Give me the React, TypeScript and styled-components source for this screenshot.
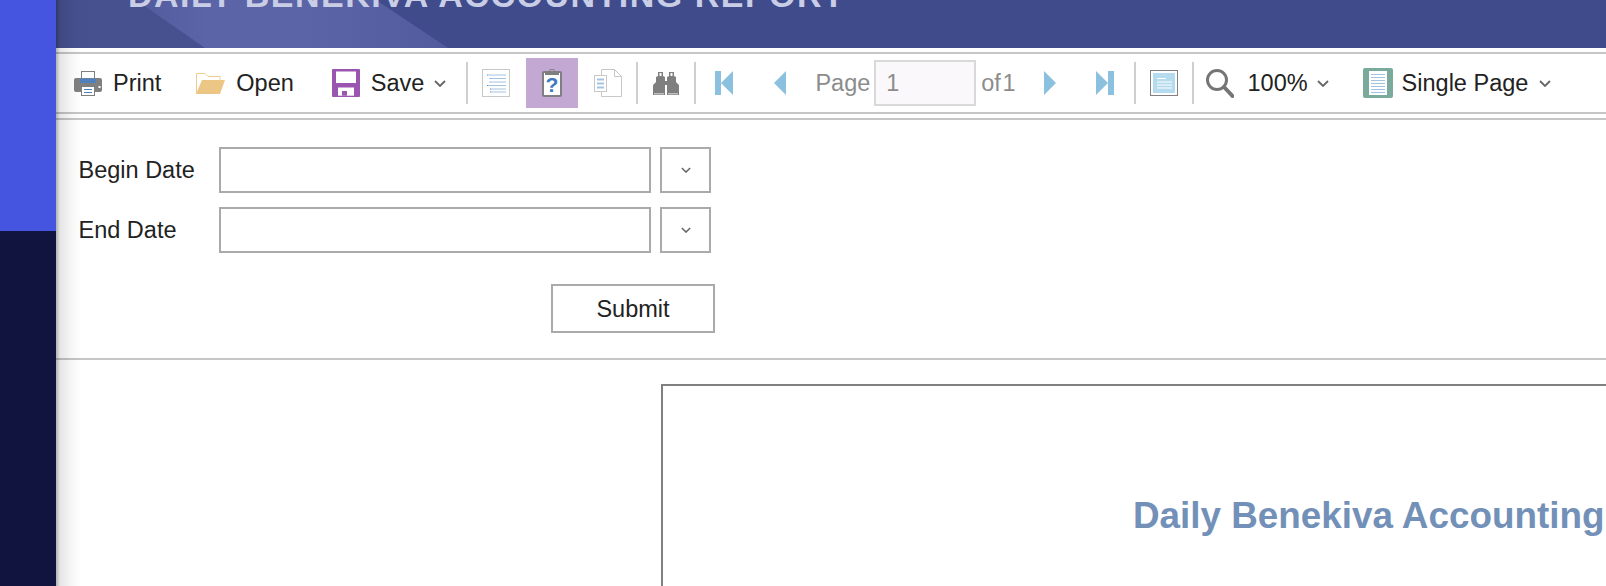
import React from "react";
import styled, { createGlobalStyle } from "styled-components";

const Global = createGlobalStyle`
  html, body { margin: 0; padding: 0; height: 100%; overflow: hidden; background: #fff; }
  #root { height: 100%; }
  * { box-sizing: border-box; }
`;

const Page = styled.div`
  display: flex;
  width: 100%;
  height: 100vh;
  overflow: hidden;
  font-family: "Liberation Sans", Arial, sans-serif;
  color: #222;
`;

const Sidebar = styled.aside`
  flex: 0 0 56px;
  background: linear-gradient(#4655e0 231px, #10143f 231px);
`;

const Main = styled.main`
  position: relative;
  flex: 1;
  min-width: 0;
  display: flex;
  flex-direction: column;
  background: #fff;
  &::after {
    content: "";
    position: absolute;
    left: 0;
    top: 0;
    bottom: 0;
    width: 26px;
    background: linear-gradient(90deg, rgba(0, 0, 0, 0.3), rgba(0, 0, 0, 0.1) 4px, rgba(0, 0, 0, 0.03) 16px, transparent);
    pointer-events: none;
  }
`;

const Header = styled.header`
  position: relative;
  flex: 0 0 48px;
  overflow: hidden;
  background: #404b8c;
  padding-left: 72px;
  &::before {
    content: "";
    position: absolute;
    inset: 0;
    background: linear-gradient(90deg, #4b5592 0, #525b9c 80px, #5b64a7 150px, #5b64a7 250px, #525b9d 392px);
    clip-path: polygon(0 0, 320px 0, 392px 48px, 0 48px);
  }
  &::after {
    content: "";
    position: absolute;
    inset: 0;
    background: linear-gradient(90deg, #46508f, #4e5797);
    clip-path: polygon(0 0, 80px 0, 149px 48px, 0 48px);
  }
`;

const HeaderTitle = styled.h1`
  position: relative;
  z-index: 1;
  margin: -24px 0 0;
  font-size: 34px;
  line-height: 38px;
  font-weight: 700;
  letter-spacing: 1.5px;
  white-space: nowrap;
  color: #c9cee6;
`;

const ToolbarFrame = styled.div`
  margin-top: 4px;
  border-top: 2px solid #c6c6c6;
  border-bottom: 2px solid #c6c6c6;
`;

const Toolbar = styled.nav`
  display: flex;
  align-items: center;
  height: 58px;
  padding-left: 18px;
  font-size: 23.5px;
`;

const Tool = styled.div<{ $gap?: number; $after?: number }>`
  display: flex;
  align-items: center;
  gap: ${(p) => p.$gap ?? 11}px;
  margin-right: ${(p) => p.$after ?? 0}px;
  white-space: nowrap;
  svg { flex: none; display: block; }
`;

const Chevron = styled.svg<{ $shift: number }>`
  margin-left: ${(p) => p.$shift}px;
`;

const Separator = styled.span<{ $before?: number; $after?: number }>`
  flex: none;
  width: 2px;
  height: 42px;
  background: #cfcfcf;
  margin-left: ${(p) => p.$before ?? 2}px;
  margin-right: ${(p) => p.$after ?? 2}px;
`;

const IconButton = styled.div<{ $active?: boolean; $after?: number }>`
  flex: none;
  width: 52px;
  height: 50px;
  display: flex;
  align-items: center;
  justify-content: center;
  background: ${(p) => (p.$active ? "#c3a8d4" : "transparent")};
  margin-right: ${(p) => p.$after ?? 0}px;
  svg { display: block; }
`;

const Muted = styled.span<{ $before?: number; $after?: number }>`
  flex: none;
  color: #8c8c8c;
  white-space: nowrap;
  word-spacing: -5px;
  margin-left: ${(p) => p.$before ?? 0}px;
  margin-right: ${(p) => p.$after ?? 0}px;
`;

const PageInput = styled.div`
  flex: none;
  width: 102px;
  height: 46px;
  border: 2px solid #d9d9d9;
  background: #faf8fb;
  color: #8c8c8c;
  padding-left: 10px;
  display: flex;
  align-items: center;
  margin-right: 5px;
`;

const FormPanel = styled.section`
  margin-top: 4px;
  border-top: 2px solid #c6c6c6;
  border-bottom: 2px solid #c6c6c6;
  padding: 27px 0 25px 22.5px;
`;

const Form = styled.div`
  width: 636.5px;
  display: flex;
  flex-direction: column;
  gap: 14.5px;
`;

const FieldRow = styled.div`
  display: flex;
  align-items: center;
  font-size: 23.5px;
`;

const FieldLabel = styled.label`
  flex: 0 0 140.5px;
  padding-top: 2px;
`;

const DateInput = styled.div`
  flex: 0 0 432px;
  height: 45.5px;
  border: 2px solid #aaa;
  background: #fff;
`;

const DropButton = styled.div`
  flex: 0 0 51px;
  height: 45.5px;
  margin-left: 9px;
  border: 2px solid #aaa;
  display: flex;
  align-items: center;
  justify-content: center;
`;

const SubmitButton = styled.div`
  align-self: flex-end;
  width: 164px;
  height: 49px;
  margin-top: 17px;
  padding-top: 2px;
  border: 2px solid #aaa;
  display: flex;
  align-items: center;
  justify-content: center;
  font-size: 23.5px;
`;

const ReportArea = styled.section`
  flex: 1;
  padding: 24px 0 0 605px;
  min-height: 0;
`;

const ReportBox = styled.div`
  width: 1400px;
  height: 600px;
  border: 2px solid #808080;
  padding: 107px 0 0 470px;
`;

const ReportTitle = styled.h2`
  margin: 0;
  font-size: 36.85px;
  line-height: 46px;
  font-weight: 700;
  color: #7290b8;
  white-space: nowrap;
`;

const Chev = ({ small, shift = -1 }: { small?: boolean; shift?: number }) => (
  <Chevron $shift={small ? 0 : shift} width={small ? 10 : 12} height={small ? 6 : 7} viewBox="0 0 12 7" fill="none">
    <path d="M1 1l5 5 5-5" stroke="#666" strokeWidth="1.8" />
  </Chevron>
);

const PrintIcon = () => (
  <svg width="28" height="25" viewBox="0 0 28 25">
    <rect x="7.500" y=".5" width="13" height="9" fill="#fff" stroke="#808080" />
    <path d="M2 7h24a2 2 0 0 1 2 2v10a2 2 0 0 1-2 2H2a2 2 0 0 1-2-2V9a2 2 0 0 1 2-2z" fill="#808080" />
    <rect x="6" y="7.500" width="16" height="4.500" fill="#4f81bd" />
    <rect x="24.500" y="15" width="2" height="2" fill="#fff" />
    <rect x="7.500" y="15.500" width="13" height="9" fill="#fff" stroke="#808080" />
    <path d="M10 18.500h8M10 21.500h8" stroke="#4f81bd" />
  </svg>
);

const OpenIcon = () => (
  <svg width="29" height="21" viewBox="0 0 29 21" fill="none">
    <path d="M.5 21V.5H9l3 3h12V7" stroke="#eecb8f" />
    <path d="M0 21 6 7h23l-5 14z" fill="#ebc684" />
  </svg>
);

const SaveIcon = () => (
  <svg width="28" height="28" viewBox="0 0 28 28">
    <rect width="28" height="28" fill="#9a55b0" rx="1" />
    <rect x="4" y="2.500" width="20" height="11.500" fill="#fff" />
    <rect x="6" y="18.500" width="16" height="8.200" fill="#fff" />
    <rect x="10" y="22" width="5" height="4.700" fill="#9a55b0" />
  </svg>
);

const ListIcon = () => (
  <svg width="28" height="28" viewBox="0 0 28 28" fill="none">
    <rect x=".5" y=".5" width="27" height="27" fill="#fff" stroke="#c8c8c8" />
    <path d="M6 6h18M8.500 9.500h15.500M8.500 13h15.500M6 16.500h18M8.500 20h15.500M8.500 23h15.500" stroke="#a3c3e2" />
    <path d="M5 6h1M7.500 9.500h1M7.500 13h1M5 16.500h1M8 20h1M8 23h1" stroke="#5b8ec6" />
  </svg>
);

const ClipboardIcon = () => (
  <svg width="20" height="28" viewBox="0 0 20 28">
    <rect x="1" y="3" width="18" height="24" rx="1" fill="#fff" stroke="#7f7f7f" strokeWidth="2" />
    <rect x="3" y="3" width="14" height="3" fill="#7f7f7f" />
    <path d="M7.500 3.500V1.500a1 1 0 0 1 1-1h3a1 1 0 0 1 1 1v2" fill="none" stroke="#7f7f7f" />
    <text x="10" y="23" textAnchor="middle" fontFamily="Liberation Sans" fontWeight="700" fontSize="21" fill="#3f78bf">
      ?
    </text>
  </svg>
);

const CopyIcon = () => (
  <svg width="28" height="28" viewBox="0 0 28 28" fill="none">
    <path d="M7.500 .5h13l7 7v20h-20z" fill="#fff" stroke="#c8c8c8" />
    <path d="M20.500 .5v7h7" stroke="#c8c8c8" />
    <rect x=".5" y="6.500" width="12" height="16" fill="#fff" stroke="#c8c8c8" />
    <path d="M3 10.500h7M3 14.500h7M3 18.500h7" stroke="#a3c3e2" strokeWidth="2" />
  </svg>
);

const BinocularsIcon = () => (
  <svg width="26" height="23" viewBox="0 0 26 23">
    <path d="M5 0h5v4l2 1v18H0V13l3-3V5l2-1z" fill="#7f7f7f" />
    <path d="M21 0h-5v4l-2 1v18h12V13l-3-3V5l-2-1z" fill="#7f7f7f" />
    <rect x="12" y="9" width="2" height="4" fill="#7f7f7f" />
    <path d="M6.500 1h2v3h-2zM17.500 1h2v3h-2zM1 21.500h10v.8H1zM15 21.500h10v.8H15z" fill="#fff" />
  </svg>
);

const NavIcon = ({ kind }: { kind: "first" | "prev" | "next" | "last" }) => {
  const c = "#8bc0de";
  if (kind === "first")
    return (
      <svg width="18" height="24" viewBox="0 0 18 24">
        <rect width="6" height="24" fill={c} />
        <path d="M18 0v24L6 12z" fill={c} />
      </svg>
    );
  if (kind === "last")
    return (
      <svg width="18" height="24" viewBox="0 0 18 24">
        <rect x="12" width="6" height="24" fill={c} />
        <path d="M0 0v24l12-12z" fill={c} />
      </svg>
    );
  if (kind === "prev")
    return (
      <svg width="12" height="24" viewBox="0 0 12 24">
        <path d="M12 0v24L0 12z" fill={c} />
      </svg>
    );
  return (
    <svg width="12" height="24" viewBox="0 0 12 24">
      <path d="M0 0v24l12-12z" fill={c} />
    </svg>
  );
};

const ViewIcon = () => (
  <svg width="28" height="26" viewBox="0 0 28 26" fill="none">
    <rect x=".5" y=".5" width="27" height="25" fill="#fff" stroke="#808080" />
    <rect x="3" y="3" width="22" height="20" fill="#b5dbef" />
    <path d="M7 8.500h9M7 12h15M7 15h15M7 18h15" stroke="#fff" />
  </svg>
);

const SearchIcon = () => (
  <svg width="28" height="29" viewBox="0 0 28 29" fill="none">
    <circle cx="11" cy="11" r="9.500" stroke="#757575" strokeWidth="3" />
    <path d="M18 18l8.500 9" stroke="#757575" strokeWidth="4" strokeLinecap="round" />
  </svg>
);

const SinglePageIcon = () => (
  <svg width="30" height="30" viewBox="0 0 30 30" fill="none">
    <rect width="30" height="30" rx="2" fill="#7aaa9b" />
    <rect x="6" y="3" width="18" height="24" fill="#fff" />
    <path d="M8 6.500h14M8 9.500h14M8 12.500h14M8 15.500h14M8 18.500h14M8 21.500h14M8 24.500h14" stroke="#a3c3e2" />
  </svg>
);

export default function App() {
  return (
    <Page>
      <Global />
      <Sidebar />
      <Main>
        <Header>
          <HeaderTitle>DAILY BENEKIVA ACCOUNTING REPORT</HeaderTitle>
        </Header>
        <ToolbarFrame>
          <Toolbar>
            <Tool $after={35}>
              <PrintIcon />
              <span>Print</span>
            </Tool>
            <Tool $after={38}>
              <OpenIcon />
              <span>Open</span>
            </Tool>
            <Tool $after={18}>
              <SaveIcon />
              <span>Save</span>
              <Chev />
            </Tool>
            <Separator />
            <IconButton $after={4}><ListIcon /></IconButton>
            <IconButton $active $after={4}><ClipboardIcon /></IconButton>
            <IconButton><CopyIcon /></IconButton>
            <Separator />
            <IconButton><BinocularsIcon /></IconButton>
            <Separator />
            <IconButton $after={4}><NavIcon kind="first" /></IconButton>
            <IconButton><NavIcon kind="prev" /></IconButton>
            <Muted $before={9} $after={4}>Page</Muted>
            <PageInput>1</PageInput>
            <Muted $after={8}>of 1</Muted>
            <IconButton $after={3}><NavIcon kind="next" /></IconButton>
            <IconButton><NavIcon kind="last" /></IconButton>
            <Separator $before={3} />
            <IconButton><ViewIcon /></IconButton>
            <Separator $after={12} />
            <Tool $gap={14} $after={34}>
              <SearchIcon />
              <span>100%</span>
              <Chev shift={-5} />
            </Tool>
            <Tool $gap={9}>
              <SinglePageIcon />
              <span>Single Page</span>
              <Chev shift={2} />
            </Tool>
          </Toolbar>
        </ToolbarFrame>
        <FormPanel>
          <Form>
            <FieldRow>
              <FieldLabel>Begin Date</FieldLabel>
              <DateInput />
              <DropButton><Chev small /></DropButton>
            </FieldRow>
            <FieldRow>
              <FieldLabel>End Date</FieldLabel>
              <DateInput />
              <DropButton><Chev small /></DropButton>
            </FieldRow>
            <SubmitButton>Submit</SubmitButton>
          </Form>
        </FormPanel>
        <ReportArea>
          <ReportBox>
            <ReportTitle>Daily Benekiva Accounting</ReportTitle>
          </ReportBox>
        </ReportArea>
      </Main>
    </Page>
  );
}
